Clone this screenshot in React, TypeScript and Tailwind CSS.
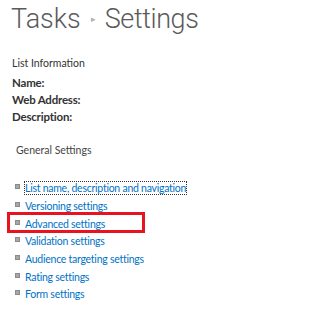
const links = [
  'List name, description and navigation',
  'Versioning settings',
  'Advanced settings',
  'Validation settings',
  'Audience targeting settings',
  'Rating settings',
  'Form settings',
];

function Bullet() {
  return <span className="inline-block w-[5px] h-[5px] bg-[#a8a8a8] border border-[#8a8a8a] shrink-0" />;
}

export default function App() {
  return (
    <div
      className="w-[319px] h-[322px] bg-white text-[#444] overflow-hidden"
      style={{ fontFamily: 'Lato, "Open Sans", sans-serif' }}
    >
      {/* Title */}
      <div
        className="pl-[11px] pt-[5px] flex items-center h-[34px]"
        style={{ fontFamily: 'Roboto, Lato, sans-serif' }}
      >
        <span className="text-[27px] font-light text-[#5a5a5a] leading-none">Tasks</span>
        <span className="ml-[10px] mr-[9px] text-[9px] text-[#b0b0b0]">▸</span>
        <span className="text-[27px] font-light text-[#5a5a5a] leading-none tracking-[-0.4px]">Settings</span>
      </div>

      {/* List info */}
      <div className="pl-[12px] pt-[22px] text-[10.5px] text-[#333] leading-[14px]">List Information</div>
      <div className="pl-[12px] pt-[6px] flex flex-col gap-[3px] text-[11.5px] font-bold text-[#333] leading-[14px] tracking-[-0.2px]">
        <div>Name:</div>
        <div>Web Address:</div>
        <div>Description:</div>
      </div>

      <div className="pl-[16px] pt-[19px] text-[10.5px] text-[#444] leading-[14px]">General Settings</div>

      {/* Links */}
      <ul className="pt-[21px] flex flex-col">
        {links.map((l, i) => (
          <li key={l} className="h-[17.7px] flex items-center pl-[15px]">
            <div
              className={
                i === 2
                  ? '-ml-[8px] pl-[5px] flex items-center h-[21px] border-[3px] border-[#e8131f] w-[138px]'
                  : 'flex items-center'
              }
            >
              <Bullet />
              <a
                className={
                  'ml-[5px] mt-[3px] text-[10.5px] tracking-[-0.25px] text-[#0072c6] leading-[12px] ' +
                  (i === 0 ? 'outline outline-1 outline-dotted outline-[#333] outline-offset-0' : '')
                }
              >
                {l}
              </a>
            </div>
          </li>
        ))}
      </ul>
    </div>
  );
}
